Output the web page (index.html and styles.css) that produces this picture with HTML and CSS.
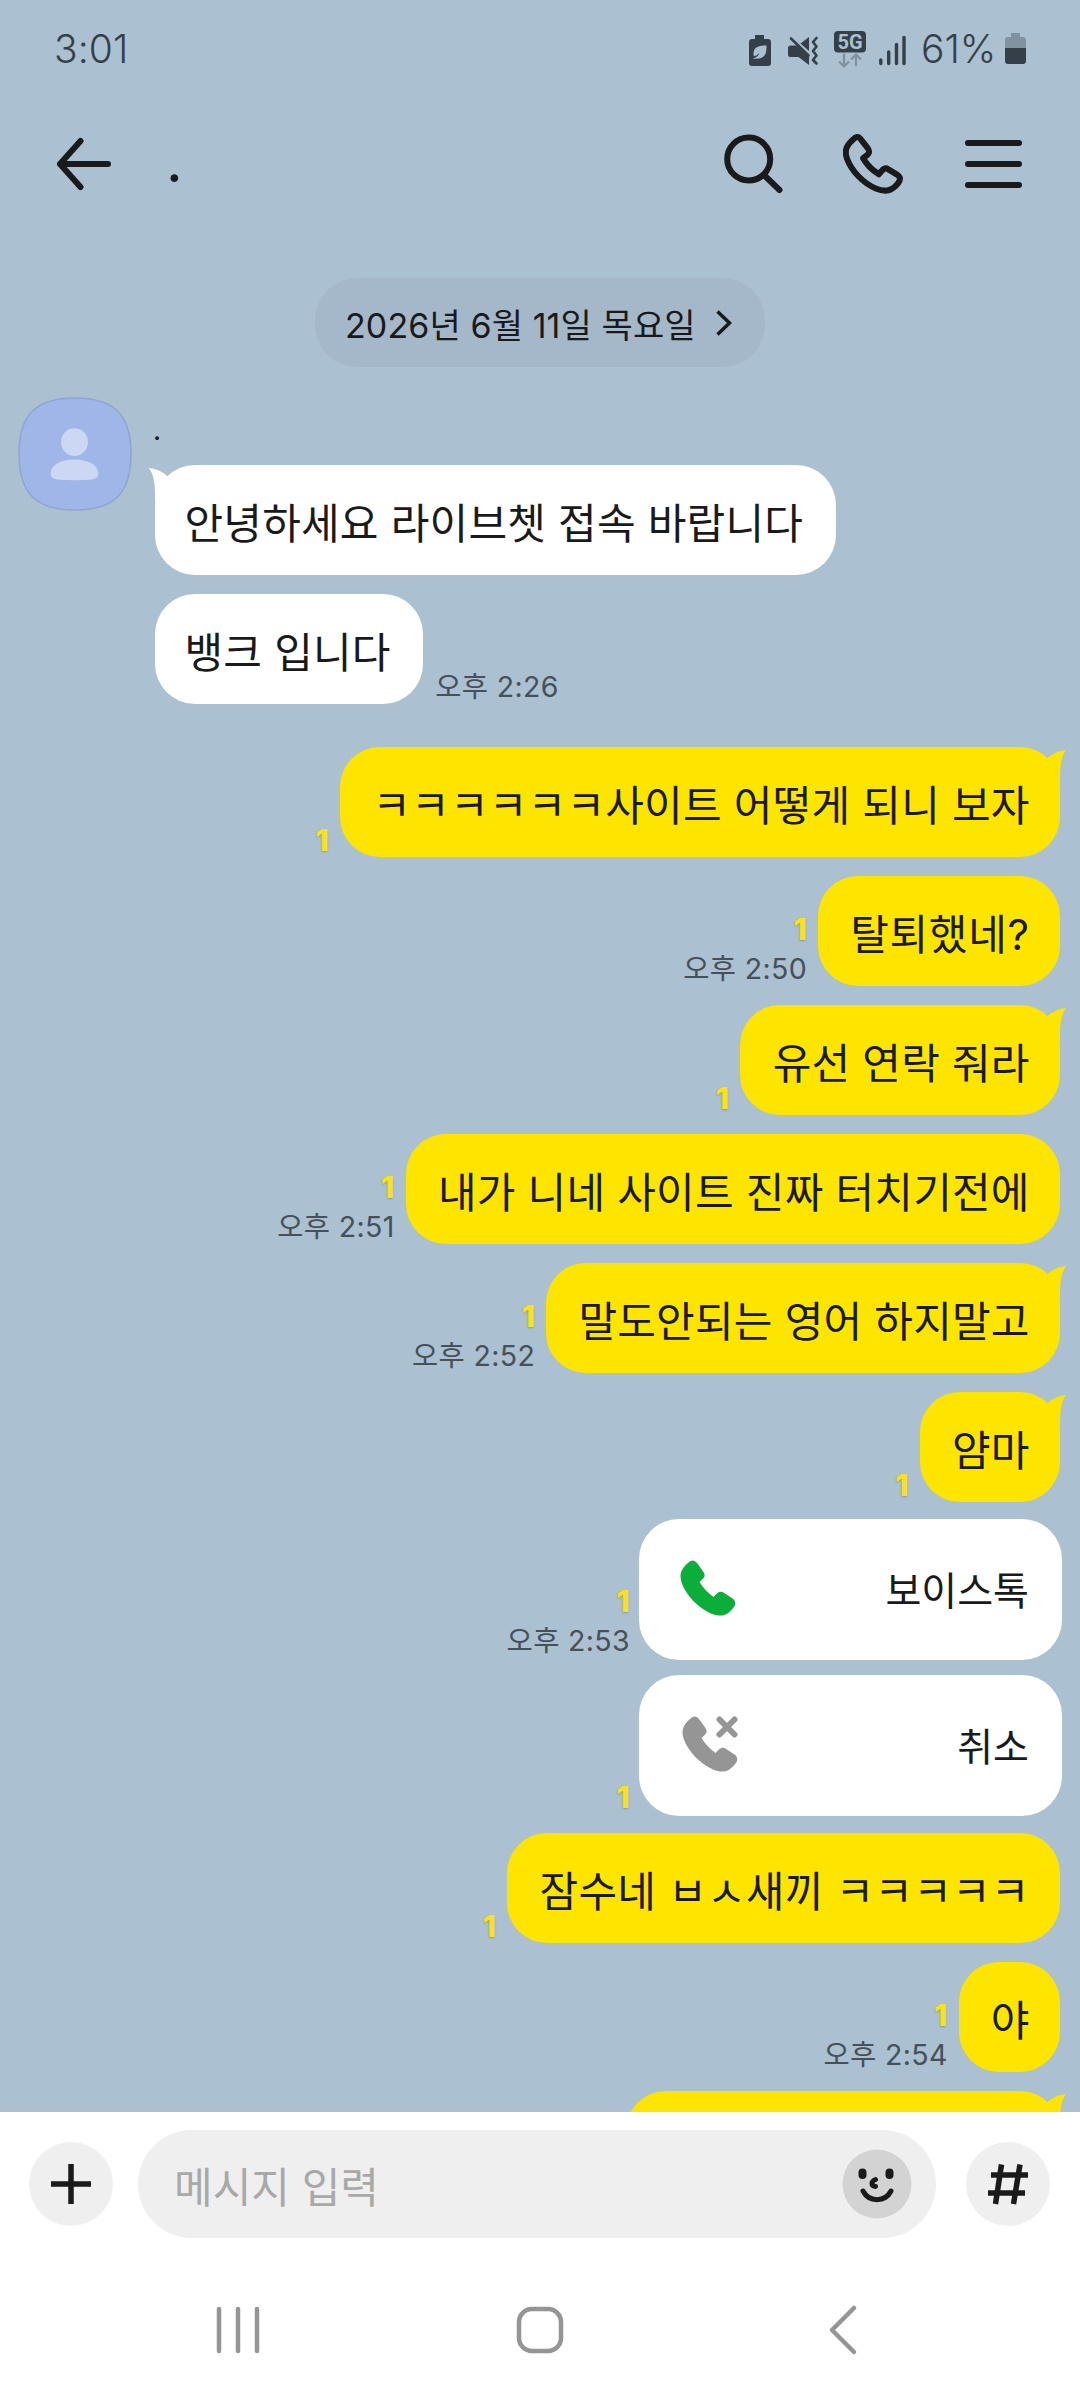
FILE: index.html
```html
<!DOCTYPE html>
<html lang="ko">
<head>
<meta charset="utf-8">
<title>채팅</title>
<link rel="stylesheet" href="styles.css">
</head>
<body>
<svg class="defs" width="0" height="0" aria-hidden="true">
  <symbol id="handset" viewBox="0 0 56 56">
    <path d="M8 3C11 -.5 14.500 -.5 17 3L23.500 12C25 14.500 25 16 23.500 18L19.500 22C23 28 28 33 33.500 37L37 33.500C39 31.500 41 31 43.500 32.500L52.500 38.500C56 41 56 44.500 53.500 47.500C47 56 41 57.500 31 53.500C18 48 6 35 1.700 23C-1 14.500 1 9 8 3Z"/>
  </symbol>
  <symbol id="tail" viewBox="0 0 24 34">
    <path d="M0 13L5 9.500Q14 1.500 24 1Q18 9 18 26V34H0Z"/>
  </symbol>
</svg>
<div class="phone">
  <header class="status">
    <span class="clock">3:01</span>
    <svg class="status-icons" width="168" height="44" viewBox="744 25 168 44">
      <path fill="#353f48" d="M755 33h9v4h4q3 0 3 3v21q0 3-3 3h-16q-3 0-3-3V40q0-3 3-3h3z"/>
      <path fill="#abc0d1" d="M766.500 43.500c-9 0-13 2.500-13 8 0 1.300.2 2 .5 2.800 1.500-.3 4-1.500 5.500-3.500-1 3-3 5-7 5.700 5 .5 8.500.2 11-2 2.800-2.500 3-6 3-11z"/>
      <path fill="#353f48" d="M788 46q0-2.500 2.500-2.500h6L809 54v9l-10.500-8h-8q-2.500 0-2.500-2.500zM800.500 41.500l8.500-6.500v14z"/>
      <path d="M791 36.500l17.500 17M816.500 36l-3.500 4 3.500 4.500-3.500 4.500 3.500 4.500-3.500 4.500 3.500 3.500" stroke="#353f48" stroke-width="2.600" fill="none" stroke-linecap="round" stroke-linejoin="round"/>
      <rect x="834" y="29" width="32" height="21.500" rx="4" fill="#353f48"/>
      <text x="850" y="46.700" class="five-g" text-anchor="middle">5G</text>
      <path d="M844 51.500v13m-5-5l5 5 5-5M856 64V52.500m-5 5l5-5 5 5" stroke="#7f919f" stroke-width="2.200" fill="none"/>
      <path d="M880.800 58v3.500M888.700 50v11.500M896.500 42.500v19M904 35.500v26" stroke="#353f48" stroke-width="3.400" stroke-linecap="round"/>
    </svg>
    <span class="percent">61%</span>
    <svg class="battery" width="22" height="32" viewBox="0 0 22 32">
      <path fill="#8193a1" d="M6 0h9v4h3q3 0 3 3v9H0V7q0-3 3-3h3z"/>
      <path fill="#353f48" d="M0 15h21v13q0 3-3 3H3q-3 0-3-3z"/>
    </svg>
  </header>

  <nav class="topbar">
    <svg class="back" width="56" height="56" viewBox="0 0 56 56"><path d="M52 28H4M24.500 5L4 28l20.500 23"/></svg>
    <h1 class="room">.</h1>
    <svg width="60" height="60" viewBox="0 0 60 60"><circle cx="24.700" cy="25" r="21.500"/><path d="M40.500 41.500L55.500 56"/></svg>
    <svg class="call" width="60" height="60" viewBox="-1.500 -1.500 59.500 59.500"><path d="M8.500 4C11.500 .7 14 .7 16 3.500L23 12.500C25 15.500 25 17 23 19L18.500 22.500C22 29 28 34.500 34 38.500L37 35C39 32.500 41 32 43.500 33.500L52.500 39C56 41.500 55.500 44 53 47.500C47 55 41 56.500 31 52.500C18 47 7 35 2.500 23C-.5 14.500 2 10 8.500 4Z"/></svg>
    <svg width="57" height="50" viewBox="0 0 57 50"><path d="M3 4h51M3 25h51M3 46h51"/></svg>
  </nav>

  <main class="chat">
    <div class="date"><span>2026년 6월 11일 목요일</span>
      <svg width="18" height="28" viewBox="0 0 18 28"><path d="M2.500 2.500l12 11.500-12 11.500"/></svg>
    </div>

    <section class="incoming">
      <svg class="avatar" width="114" height="114" viewBox="0 0 115 115">
        <path class="plate" d="M57.500 1C97 1 114 18 114 57.500S97 114 57.500 114 1 97 1 57.500 18 1 57.500 1Z"/>
        <rect x="43.500" y="31.500" width="27" height="28" rx="13.500"/>
        <path d="M57 63C70 63 81 68 81 77.500C81 82 77 83 72 83.500Q57 84.500 42 83.500C37 83 33 82 33 77.500C33 68 44 63 57 63Z"/>
      </svg>
      <div class="thread">
        <div class="sender">.</div>
        <div class="row"><p class="bubble">안녕하세요 라이브쳇 접속 바랍니다<svg class="tail" width="24" height="34"><use href="#tail"/></svg></p></div>
        <div class="row"><p class="bubble">뱅크 입니다</p><div class="meta"><time>오후 2:26</time></div></div>
      </div>
    </section>

    <section class="outgoing">
      <div class="row"><div class="meta"><b>1</b></div><p class="bubble">ㅋㅋㅋㅋㅋㅋ사이트 어떻게 되니 보자<svg class="tail" width="24" height="34"><use href="#tail"/></svg></p></div>
      <div class="row"><div class="meta"><b>1</b><time>오후 2:50</time></div><p class="bubble question">탈퇴했네?</p></div>
      <div class="row"><div class="meta"><b>1</b></div><p class="bubble">유선 연락 줘라<svg class="tail" width="24" height="34"><use href="#tail"/></svg></p></div>
      <div class="row"><div class="meta"><b>1</b><time>오후 2:51</time></div><p class="bubble">내가 니네 사이트 진짜 터치기전에</p></div>
      <div class="row"><div class="meta"><b>1</b><time>오후 2:52</time></div><p class="bubble">말도안되는 영어 하지말고<svg class="tail" width="24" height="34"><use href="#tail"/></svg></p></div>
      <div class="row"><div class="meta"><b>1</b></div><p class="bubble">얌마<svg class="tail" width="24" height="34"><use href="#tail"/></svg></p></div>
      <div class="row calls"><div class="meta"><b>1</b><time>오후 2:53</time></div>
        <div class="card"><svg class="voice" width="56" height="56"><use href="#handset"/></svg><span>보이스톡</span></div></div>
      <div class="row calls"><div class="meta"><b>1</b></div>
        <div class="card"><svg class="cancel" width="57" height="56"><use href="#handset" width="56" height="56"/><path d="M37.500 3.500l15 15m0-15l-15 15"/></svg><span>취소</span></div></div>
      <div class="row"><div class="meta"><b>1</b></div><p class="bubble">잠수네 ㅂㅅ새끼 ㅋㅋㅋㅋㅋ</p></div>
      <div class="row"><div class="meta"><b>1</b><time>오후 2:54</time></div><p class="bubble">야</p></div>
      <div class="row"><p class="bubble clipped"><svg class="tail" width="24" height="34"><use href="#tail"/></svg></p></div>
    </section>
  </main>

  <footer class="composer">
    <div class="round"><svg width="84" height="84" viewBox="0 0 84 84"><path d="M42 22v40M22 42h40"/></svg></div>
    <div class="field"><span>메시지 입력</span>
      <svg width="70" height="70" viewBox="0 0 70 70"><circle cx="35" cy="35" r="34.500"/><rect x="16.500" y="19.500" width="8" height="10.500" rx="4"/><rect x="43.500" y="19.500" width="8" height="10.500" rx="4"/><path d="M33.500 30.500q-3.500 1.500-3.500 4t3.500 3M21 42c6 11.500 22 11.500 28 0"/></svg>
    </div>
    <div class="round"><svg class="hash" width="84" height="84" viewBox="0 0 84 84"><path d="M35.500 22.500L29.500 62M54 22.500L47.500 62M25 33h37M22 51h37"/></svg></div>
  </footer>

  <nav class="system">
    <svg width="46" height="50" viewBox="0 0 46 50"><path d="M4 4v42M23 4v42M42 4v42"/></svg>
    <svg width="50" height="50" viewBox="0 0 50 50"><rect x="4" y="4" width="42" height="42" rx="13"/></svg>
    <svg width="46" height="52" viewBox="0 0 46 52"><path d="M35 4L13 26l22 22"/></svg>
  </nav>
</div>
</body>
</html>
```
FILE: styles.css
```css
* { box-sizing: border-box; }
body { margin: 0; background: #abc0d1; }
h1, p { margin: 0; font-weight: 400; }
svg { display: block; flex: none; }
.defs { position: absolute; }

.phone {
  width: 1080px;
  height: 2400px;
  display: flex;
  flex-direction: column;
  overflow: hidden;
  background: #abc0d1;
  color: #1a1a1a;
  font-family: Inter, "Noto Sans CJK KR", sans-serif;
}

/* status bar */
.status {
  height: 94px;
  flex: none;
  display: flex;
  align-items: center;
  padding: 3px 53px 0 54px;
  color: #353f48;
  font-size: 39px;
  font-weight: 300;
}
.clock { letter-spacing: .100px; margin-right: auto; }
.percent { width: 81px; margin-left: 9px; letter-spacing: 0; white-space: nowrap; }
.battery { margin-left: 3px; }
.five-g { font: 700 20px Roboto, sans-serif; fill: #abc0d1; }

/* chat header */
.topbar {
  height: 140px;
  flex: none;
  display: flex;
  align-items: center;
  padding-right: 58px;
}
.topbar svg { fill: none; stroke: #1a1a1a; stroke-width: 6; stroke-linecap: round; stroke-linejoin: round; }
.topbar .back { margin-left: 56px; }
.topbar .call { margin: 0 62px 0 59px; }
.room { flex: 1; margin-left: 54px; font-size: 58px; line-height: 60px; padding-bottom: 6px; }

/* conversation */
.chat { height: 1878px; flex: none; overflow: hidden; padding-top: 44px; }
.date {
  width: 450px;
  height: 89px;
  margin: 0 auto;
  display: flex;
  align-items: center;
  justify-content: space-between;
  padding: 1px 32px 0 30px;
  border-radius: 42px;
  background: #a4b8c9;
  font-size: 34px;
  letter-spacing: .100px;
  white-space: nowrap;
}
.date svg { fill: none; stroke: #1a1a1a; stroke-width: 3.500; }
.incoming { display: flex; gap: 23px; padding: 30px 0 0 18px; }
.avatar { fill: #ccd7f3; }
.avatar .plate { fill: #a1b6e8; stroke: #8fa4d0; stroke-width: 1.500; }
.thread { display: flex; flex-direction: column; gap: 19px; }
.sender { height: 49px; line-height: 66px; margin-left: -2px; font-size: 28px; }
.thread .row { height: 110px; }
.row { display: flex; gap: 12px; }
.bubble {
  position: relative;
  height: 110px;
  padding: 0 30.300px 0 32.200px;
  border-radius: 40px;
  background: #fff;
  color: #1a1a1a;
  font-size: 42px;
  letter-spacing: .200px;
  line-height: 117px;
  white-space: nowrap;
}
.question { letter-spacing: .700px; }
.incoming .bubble { padding: 0 32.500px 0 29.500px; }
.outgoing { display: flex; flex-direction: column; gap: 19px; padding: 43px 20px 0 0; }
.outgoing .row { justify-content: flex-end; height: 110px; }
.outgoing .bubble { background: #fee500; }
.tail { position: absolute; top: 2px; right: -6px; fill: #fee500; }
.incoming .tail { right: auto; left: -6px; transform: scaleX(-1); fill: #fff; }
.meta {
  display: flex;
  flex-direction: column;
  justify-content: flex-end;
  align-items: flex-end;
  margin-bottom: -3px;
  font-size: 28.500px;
  letter-spacing: .350px;
  line-height: 40px;
  color: #455059;
  white-space: nowrap;
}
.meta b { font-size: 30px; font-weight: 800; color: #fae21a; text-shadow: 0 1px 2px rgba(90, 90, 60, .4); }
.outgoing .meta { margin-right: -1px; }
.outgoing .calls { height: 141px; margin: -2px -2px -2px 0; gap: 10px; }
.calls .meta { padding-bottom: 2px; }
.card {
  width: 423px;
  height: 141px;
  display: flex;
  align-items: center;
  justify-content: space-between;
  padding: 0 33px 3px 41px;
  border-radius: 40px;
  background: #fff;
  font-size: 39px;
}
.voice { fill: #0bae39; }
.cancel { fill: #959595; margin-left: 2px; }
.cancel path { stroke: #959595; stroke-width: 6; stroke-linecap: round; }
.clipped { width: 434px; }

/* message composer */
.composer {
  height: 144px;
  flex: none;
  display: flex;
  align-items: center;
  padding: 0 30px 0 29px;
  background: #fff;
}
.round { width: 84px; height: 84px; border-radius: 50%; background: #efefef; }
.round path { stroke: #1a1a1a; stroke-width: 5.500; fill: none; }
.field {
  width: 798px;
  height: 108px;
  margin: 0 30px 0 25px;
  display: flex;
  align-items: center;
  justify-content: space-between;
  padding: 0 24px 0 36px;
  border-radius: 54px;
  background: #efefef;
  color: #a8a8a8;
  font-size: 42px;
}
.field circle { fill: #d3d3d3; }
.field rect { fill: #1a1a1a; }
.field path { fill: none; stroke: #1a1a1a; stroke-width: 5; stroke-linecap: round; }

/* system navigation */
.system {
  flex: 1;
  display: flex;
  align-items: center;
  justify-content: space-between;
  padding: 4px 215px 0 215px;
  background: #fff;
}
.system svg { fill: none; stroke: #959595; stroke-width: 4.500; stroke-linecap: round; stroke-linejoin: round; }
```
